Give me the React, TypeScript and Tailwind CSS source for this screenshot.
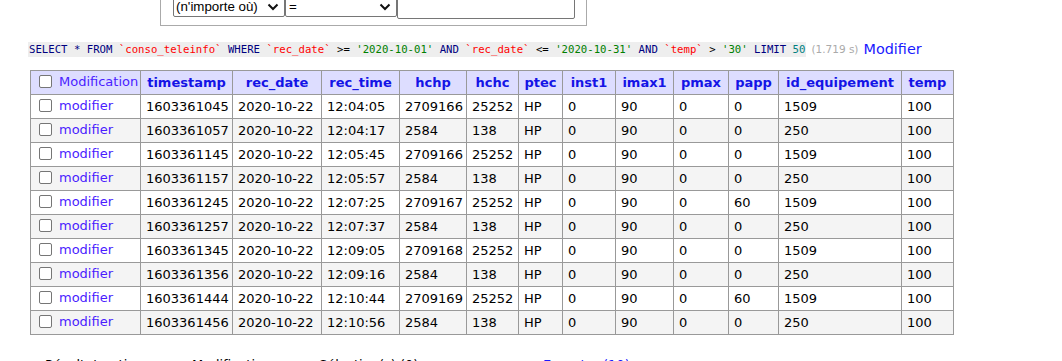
import React from 'react';

const rows = [
  ['1603361045', '2020-10-22', '12:04:05', '2709166', '25252', 'HP', '0', '90', '0', '0', '1509', '100'],
  ['1603361057', '2020-10-22', '12:04:17', '2584', '138', 'HP', '0', '90', '0', '0', '250', '100'],
  ['1603361145', '2020-10-22', '12:05:45', '2709166', '25252', 'HP', '0', '90', '0', '0', '1509', '100'],
  ['1603361157', '2020-10-22', '12:05:57', '2584', '138', 'HP', '0', '90', '0', '0', '250', '100'],
  ['1603361245', '2020-10-22', '12:07:25', '2709167', '25252', 'HP', '0', '90', '0', '60', '1509', '100'],
  ['1603361257', '2020-10-22', '12:07:37', '2584', '138', 'HP', '0', '90', '0', '0', '250', '100'],
  ['1603361345', '2020-10-22', '12:09:05', '2709168', '25252', 'HP', '0', '90', '0', '0', '1509', '100'],
  ['1603361356', '2020-10-22', '12:09:16', '2584', '138', 'HP', '0', '90', '0', '0', '250', '100'],
  ['1603361444', '2020-10-22', '12:10:44', '2709169', '25252', 'HP', '0', '90', '0', '60', '1509', '100'],
  ['1603361456', '2020-10-22', '12:10:56', '2584', '138', 'HP', '0', '90', '0', '0', '250', '100'],
];

const columns = [
  { name: 'timestamp', w: 'w-[92px]' },
  { name: 'rec_date', w: 'w-[89px]' },
  { name: 'rec_time', w: 'w-[78px]' },
  { name: 'hchp', w: 'w-[67px]' },
  { name: 'hchc', w: 'w-[52px]' },
  { name: 'ptec', w: 'w-[44px]' },
  { name: 'inst1', w: 'w-[53px]' },
  { name: 'imax1', w: 'w-[58px]' },
  { name: 'pmax', w: 'w-[55px]' },
  { name: 'papp', w: 'w-[50px]' },
  { name: 'id_equipement', w: 'w-[123px]' },
  { name: 'temp', w: 'w-[52px]' },
];

const Checkbox = () => (
  <span className="inline-block w-[13px] h-[13px] border border-[#767676] rounded-[2px] bg-white align-middle" />
);

const Chevron = () => (
  <svg width="12" height="8" viewBox="0 0 12 8" className="shrink-0">
    <path d="M1.5 1.5 L6 6 L10.5 1.5" fill="none" stroke="#111" strokeWidth="2" />
  </svg>
);

const SqlLine = () => (
  <div className="flex items-center mt-[16px] ml-[28px] h-[15px]">
    <code className="bg-[#eee] font-['DejaVu_Sans_Mono'] text-[10.67px] leading-[15px] h-[15px] px-[1px] whitespace-pre text-black">
      <span className="text-[#000080]">SELECT * FROM </span>
      <span className="text-[#f00]">`conso_teleinfo`</span>
      <span className="text-[#000080]"> WHERE </span>
      <span className="text-[#f00]">`rec_date`</span>
      {' >= '}
      <span className="text-[#008000]">'2020-10-01'</span>
      <span className="text-[#000080]"> AND </span>
      <span className="text-[#f00]">`rec_date`</span>
      {' <= '}
      <span className="text-[#008000]">'2020-10-31'</span>
      <span className="text-[#000080]"> AND </span>
      <span className="text-[#f00]">`temp`</span>
      {' > '}
      <span className="text-[#008000]">'30'</span>
      <span className="text-[#000080]"> LIMIT </span>
      <span className="text-[#008080]">50</span>
    </code>
    <span className="ml-[5px] text-[10.5px] text-[#aaa]">(1.719 s)</span>
    <a className="ml-[5px] text-[14.4px] text-[#1a1aff]">Modifier</a>
  </div>
);

export default function App() {
  return (
    <div className="w-[1062px] h-[361px] overflow-hidden bg-white font-['DejaVu_Sans',Verdana,sans-serif] text-[13px] text-black">
      {/* search fieldset, scrolled partly out of view */}
      <div className="ml-[160px] w-[427px] -mt-[4px] border border-t-0 border-[#aaa] pl-[12px] pb-[6px] flex items-start">
        <div className="w-[112px] h-[21px] border border-[#767676] rounded-[2px] flex items-center justify-between pl-[2px] pr-[5px] font-['Liberation_Sans',Arial,sans-serif] text-[13.33px]">
          <span>(n'importe où)</span>
          <Chevron />
        </div>
        <div className="w-[112px] h-[21px] border border-[#767676] rounded-[2px] flex items-center justify-between pl-[3px] pr-[5px] font-['Liberation_Sans',Arial,sans-serif] text-[13.33px]">
          <span>=</span>
          <Chevron />
        </div>
        <div className="w-[178px] h-[23px] border border-[#767676] rounded-[2px] bg-white" />
      </div>

      <SqlLine />

      <table className="ml-[30px] mt-[13px] border-collapse table-fixed border border-[#999] w-[924px]">
        <thead>
          <tr className="h-[24px] bg-[#ddf]">
            <td className="w-[110px] border border-[#999] px-[4px] py-0 text-left whitespace-nowrap">
              <span className="inline-flex items-center gap-[7px] pl-[4px]">
                <Checkbox />
                <a className="text-[#4a1dff]">Modification</a>
              </span>
            </td>
            {columns.map((c) => (
              <th key={c.name} className={`${c.w} border border-[#999] px-[4px] py-0 text-center font-bold text-[#1414e6] whitespace-nowrap`}>
                {c.name}
              </th>
            ))}
          </tr>
        </thead>
        <tbody>
          {rows.map((r, i) => (
            <tr key={r[0]} className={`h-[24px] ${i % 2 === 1 ? 'bg-[#f4f4f4]' : 'bg-white'}`}>
              <td className="border border-[#999] px-[4px] py-0 whitespace-nowrap">
                <span className="inline-flex items-center gap-[7px] pl-[4px]">
                  <Checkbox />
                  <a className="text-[#4a1dff]">modifier</a>
                </span>
              </td>
              {r.map((v, j) => (
                <td key={j} className="border border-[#999] px-[5px] py-0 whitespace-nowrap">
                  {v}
                </td>
              ))}
            </tr>
          ))}
        </tbody>
      </table>

      {/* bottom legends, cut by the window edge as in the page */}
      <div className="flex mt-[22px] ml-[45px] leading-[16px] whitespace-nowrap">
        <span className="w-[147px]">Résultat entier</span>
        <span className="w-[127px]">Modification</span>
        <span className="w-[224px]">Sélection(s) (0)</span>
        <a className="text-[#1a1aff]">Exporter (10)</a>
      </div>
    </div>
  );
}
